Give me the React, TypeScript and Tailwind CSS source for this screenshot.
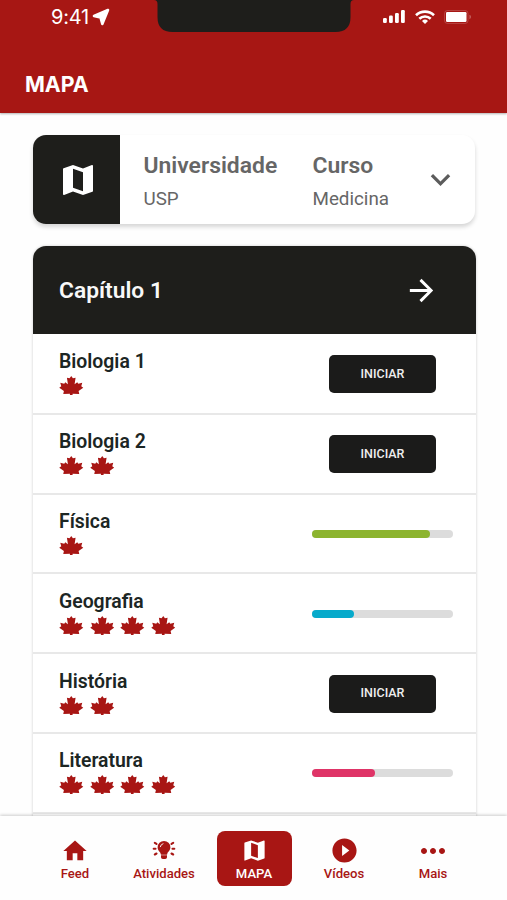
import { MdArrowForward, MdExpandMore, MdHome, MdMoreHoriz, MdPlayCircleFilled } from 'react-icons/md';

interface Subject {
  name: string;
  leaves: number;
  progress?: number;
  color?: string;
}

const subjects: Subject[] = [
  { name: 'Biologia 1', leaves: 1 },
  { name: 'Biologia 2', leaves: 2 },
  { name: 'Física', leaves: 1, progress: 84, color: 'bg-[#8cb42f]' },
  { name: 'Geografia', leaves: 4, progress: 30, color: 'bg-[#07aacb]' },
  { name: 'História', leaves: 2 },
  { name: 'Literatura', leaves: 4, progress: 44.5, color: 'bg-[#df3467]' },
];

function MapIcon({ className }: { className: string }) {
  return (
    <svg viewBox="0 0 24 24" className={className} fill="currentColor" fillRule="evenodd">
      <path d="M20.5 3l-.16.03L15 5.1 9 3 3.36 4.9c-.21.07-.36.25-.36.48V20.5c0 .28.22.5.5.5l.16-.03L9 18.9l6 2.1 5.64-1.9c.21-.07.36-.25.36-.48V3.5c0-.28-.22-.5-.5-.5zM15 18.7l-6-2.1V5.2l6 2.1v11.4z" />
    </svg>
  );
}

function MapleLeaf() {
  return (
    <svg viewBox="0 0 72 57" className="w-[24.5px] h-[19px] shrink-0" fill="#a81614">
      <path d="M36 0L31 7L23 5L26 25L18 19L15 23L3 20L6 31L0 35L14 45L12 54L32 53L32 57L40 57L40 53L60 54L58 45L72 35L66 31L69 20L57 23L54 19L46 25L49 5L41 7Z" />
    </svg>
  );
}

function BulbIcon() {
  return (
    <svg viewBox="0 0 24 24" className="w-6 h-6" fill="currentColor">
      <path d="M12 3a6.4 6.4 0 0 0-6.4 6.4c0 3.2 3.1 4.4 3.1 6.6 0 .4.3.7.7.7h5.2c.4 0 .7-.3.7-.7 0-2.2 3.1-3.4 3.1-6.6A6.4 6.4 0 0 0 12 3z" />
      <path d="M9 17.3h6v1.7c0 1.2-.8 2-1.8 2h-2.4c-1 0-1.8-.8-1.8-2z" />
      <path d="M8.3 8.7a3.7 3.7 0 0 1 2.7-3" fill="none" stroke="#fff" strokeWidth=".9" strokeLinecap="round" />
      <path d="M1.7 10.8h1.8M20.5 10.8h1.8M2.8 4.9l1.7 1M21.2 4.9l-1.7 1M2.8 16.5l1.7-1M21.2 16.5l-1.7-1" stroke="currentColor" strokeWidth="2.1" strokeLinecap="round" />
    </svg>
  );
}

function StatusBar() {
  return (
    <div className="flex justify-between h-8 pl-[51px] pr-[35px]">
      <div className="flex items-center h-[34px] text-[20px] tracking-[-0.2px] font-['Inter',sans-serif]">
        9:41
        <svg viewBox="0 0 18 18" className="w-[18px] h-[18px] ml-[3px]" fill="currentColor" stroke="currentColor" strokeWidth="2.6" strokeLinejoin="round">
          <path d="M16 2L2 8l6.500 1.500 1.800 6.500z" />
        </svg>
      </div>
      <div className="flex items-center h-[33px]">
        <svg viewBox="0 0 22 13" className="w-[22px] h-[13px] ml-px mr-px" fill="currentColor">
          <rect x="0" y="8" width="3.8" height="5" rx="1.2" />
          <rect x="6" y="5.5" width="3.8" height="7.5" rx="1.2" />
          <rect x="12" y="3" width="3.8" height="10" rx="1.2" />
          <rect x="18" y="0" width="3.8" height="13" rx="1.2" />
        </svg>
        <svg viewBox="0 0 20 14" className="w-5 h-3.5 ml-[9px]" fill="none" stroke="currentColor" strokeWidth="2.6">
          <path d="M1 5.2a13 13 0 0 1 18 0" />
          <path d="M4.3 8.8a8.2 8.2 0 0 1 11.4 0" />
          <path d="M10 14l-3-3a4.3 4.3 0 0 1 6 0z" fill="currentColor" stroke="none" />
        </svg>
        <svg viewBox="0 0 28 14" className="w-7 h-3.5 ml-[9px]">
          <rect x=".5" y=".5" width="23.5" height="13" rx="3" fill="none" stroke="#fff" strokeOpacity=".18" />
          <rect x="2" y="2" width="20.5" height="10" rx="1.2" fill="#fff" />
          <path d="M25.5 4.8a2.4 2.4 0 0 1 0 4.4z" fill="#fff" fillOpacity=".35" />
        </svg>
      </div>
    </div>
  );
}

function SubjectRow({ subject }: { subject: Subject }) {
  return (
    <div className="flex items-center justify-between h-[79.8px] pl-[26px] pr-[23px] border-b-2 border-[#e8e8e8] shrink-0">
      <div className="-mt-px">
        <h3 className="text-[19.4px] leading-[22px] font-semibold text-[#1c2624]">{subject.name}</h3>
        <div className="flex gap-[6px] mt-[3px]">
          {Array.from({ length: subject.leaves }).map((_, i) => (
            <MapleLeaf key={i} />
          ))}
        </div>
      </div>
      {subject.progress ? (
        <div className="w-[141px] h-2 mt-px rounded-full bg-[#dcdcdc]">
          <div className={`h-full rounded-full ${subject.color}`} style={{ width: `${subject.progress}%` }} />
        </div>
      ) : (
        <button className="w-[107px] h-[38px] mt-px mr-[17px] rounded-[5px] bg-[#1b1b1a] text-[#eeeeee] text-[12.5px] font-medium">
          INICIAR
        </button>
      )}
    </div>
  );
}

export default function App() {
  return (
    <div className="w-full h-[900px] overflow-hidden flex flex-col bg-[#fefefe] font-['Roboto',sans-serif]">
      {/* Header */}
      <header className="relative h-[113px] shrink-0 bg-[#a71714] text-white shadow-[0_1px_2px_rgba(0,0,0,0.3)]">
        <svg viewBox="0 0 200 32" className="absolute left-[154px] top-0 w-[200px] h-8" fill="#1e1e1b">
          <path d="M0 0q3.5 0 3.5 4V17q0 15 15 15h163q15 0 15-15V4q0-4 3.5-4z" />
        </svg>
        <StatusBar />
        <h1 className="pl-[25px] pt-[37px] text-[21.3px] leading-[30px] font-bold font-['Inter',sans-serif]">MAPA</h1>
      </header>

      <main className="flex-1 min-h-0 overflow-hidden pl-[33px] pr-[31px] pt-[22px]">
        {/* Course selector */}
        <section className="flex w-[442px] h-[89px] rounded-[13px] overflow-hidden bg-white shadow-[0_3px_4px_rgba(0,0,0,0.16)]">
          <div className="w-[87px] flex items-center justify-center bg-[#1e1e1b] text-white">
            <MapIcon className="w-10 h-10 ml-[2px]" />
          </div>
          <div className="w-[169px] pl-[23.5px] pt-[16px] text-[#666]">
            <h2 className="text-[22.9px] leading-[30px] font-semibold">Universidade</h2>
            <p className="text-[18.8px] leading-[24px] mt-[6px]">USP</p>
          </div>
          <div className="w-[130px] pl-[23.5px] pt-[16px] text-[#666]">
            <h2 className="text-[22.9px] leading-[30px] font-semibold">Curso</h2>
            <p className="text-[18.8px] leading-[24px] mt-[6px]">Medicina</p>
          </div>
          <MdExpandMore className="w-[39px] h-[39px] mt-[25px] ml-[2px] text-[#5c5c5c]" />
        </section>

        {/* Chapter */}
        <section className="mt-[22px] rounded-t-[13px] overflow-hidden bg-white shadow-[0_0_3px_rgba(0,0,0,0.2)]">
          <div className="flex items-center justify-between h-[88px] mb-px pl-[26px] pr-[37px] bg-[#1e1e1b] text-white">
            <h2 className="pt-[2px] text-[22.8px] font-semibold text-[#f8f8f8]">Capítulo 1</h2>
            <MdArrowForward className="w-[35px] h-[35px] mt-px" />
          </div>
          {subjects.map((subject) => (
            <SubjectRow key={subject.name} subject={subject} />
          ))}
          <div className="h-20" />
        </section>
      </main>

      {/* Bottom navigation */}
      <nav className="relative flex justify-center h-[84px] shrink-0 pt-[15px] pl-px bg-[#fefefe] shadow-[0_-1px_3px_rgba(0,0,0,0.2)] text-[#a81614] text-[13.1px] leading-4 font-medium">
        <a className="w-[89px] flex flex-col items-center pt-[6px]">
          <MdHome className="w-[28px] h-[28px]" />
          <span className="mt-px">Feed</span>
        </a>
        <a className="w-[89px] flex flex-col items-center pt-[7px]">
          <BulbIcon />
          <span className="mt-1">Atividades</span>
        </a>
        <a className="w-[75px] h-[55px] mx-[8px] rounded-[8px] bg-[#a81614] text-white flex flex-col items-center pt-[6px]">
          <MapIcon className="w-[27px] h-[27px]" />
          <span className="mt-[2px]">MAPA</span>
        </a>
        <a className="w-[89px] flex flex-col items-center pt-[5px]">
          <MdPlayCircleFilled className="w-[29px] h-[29px]" />
          <span className="mt-px">Vídeos</span>
        </a>
        <a className="w-[89px] flex flex-col items-center pt-[2px]">
          <MdMoreHoriz className="w-9 h-9" />
          <span className="-mt-[3px]">Mais</span>
        </a>
      </nav>
    </div>
  );
}
